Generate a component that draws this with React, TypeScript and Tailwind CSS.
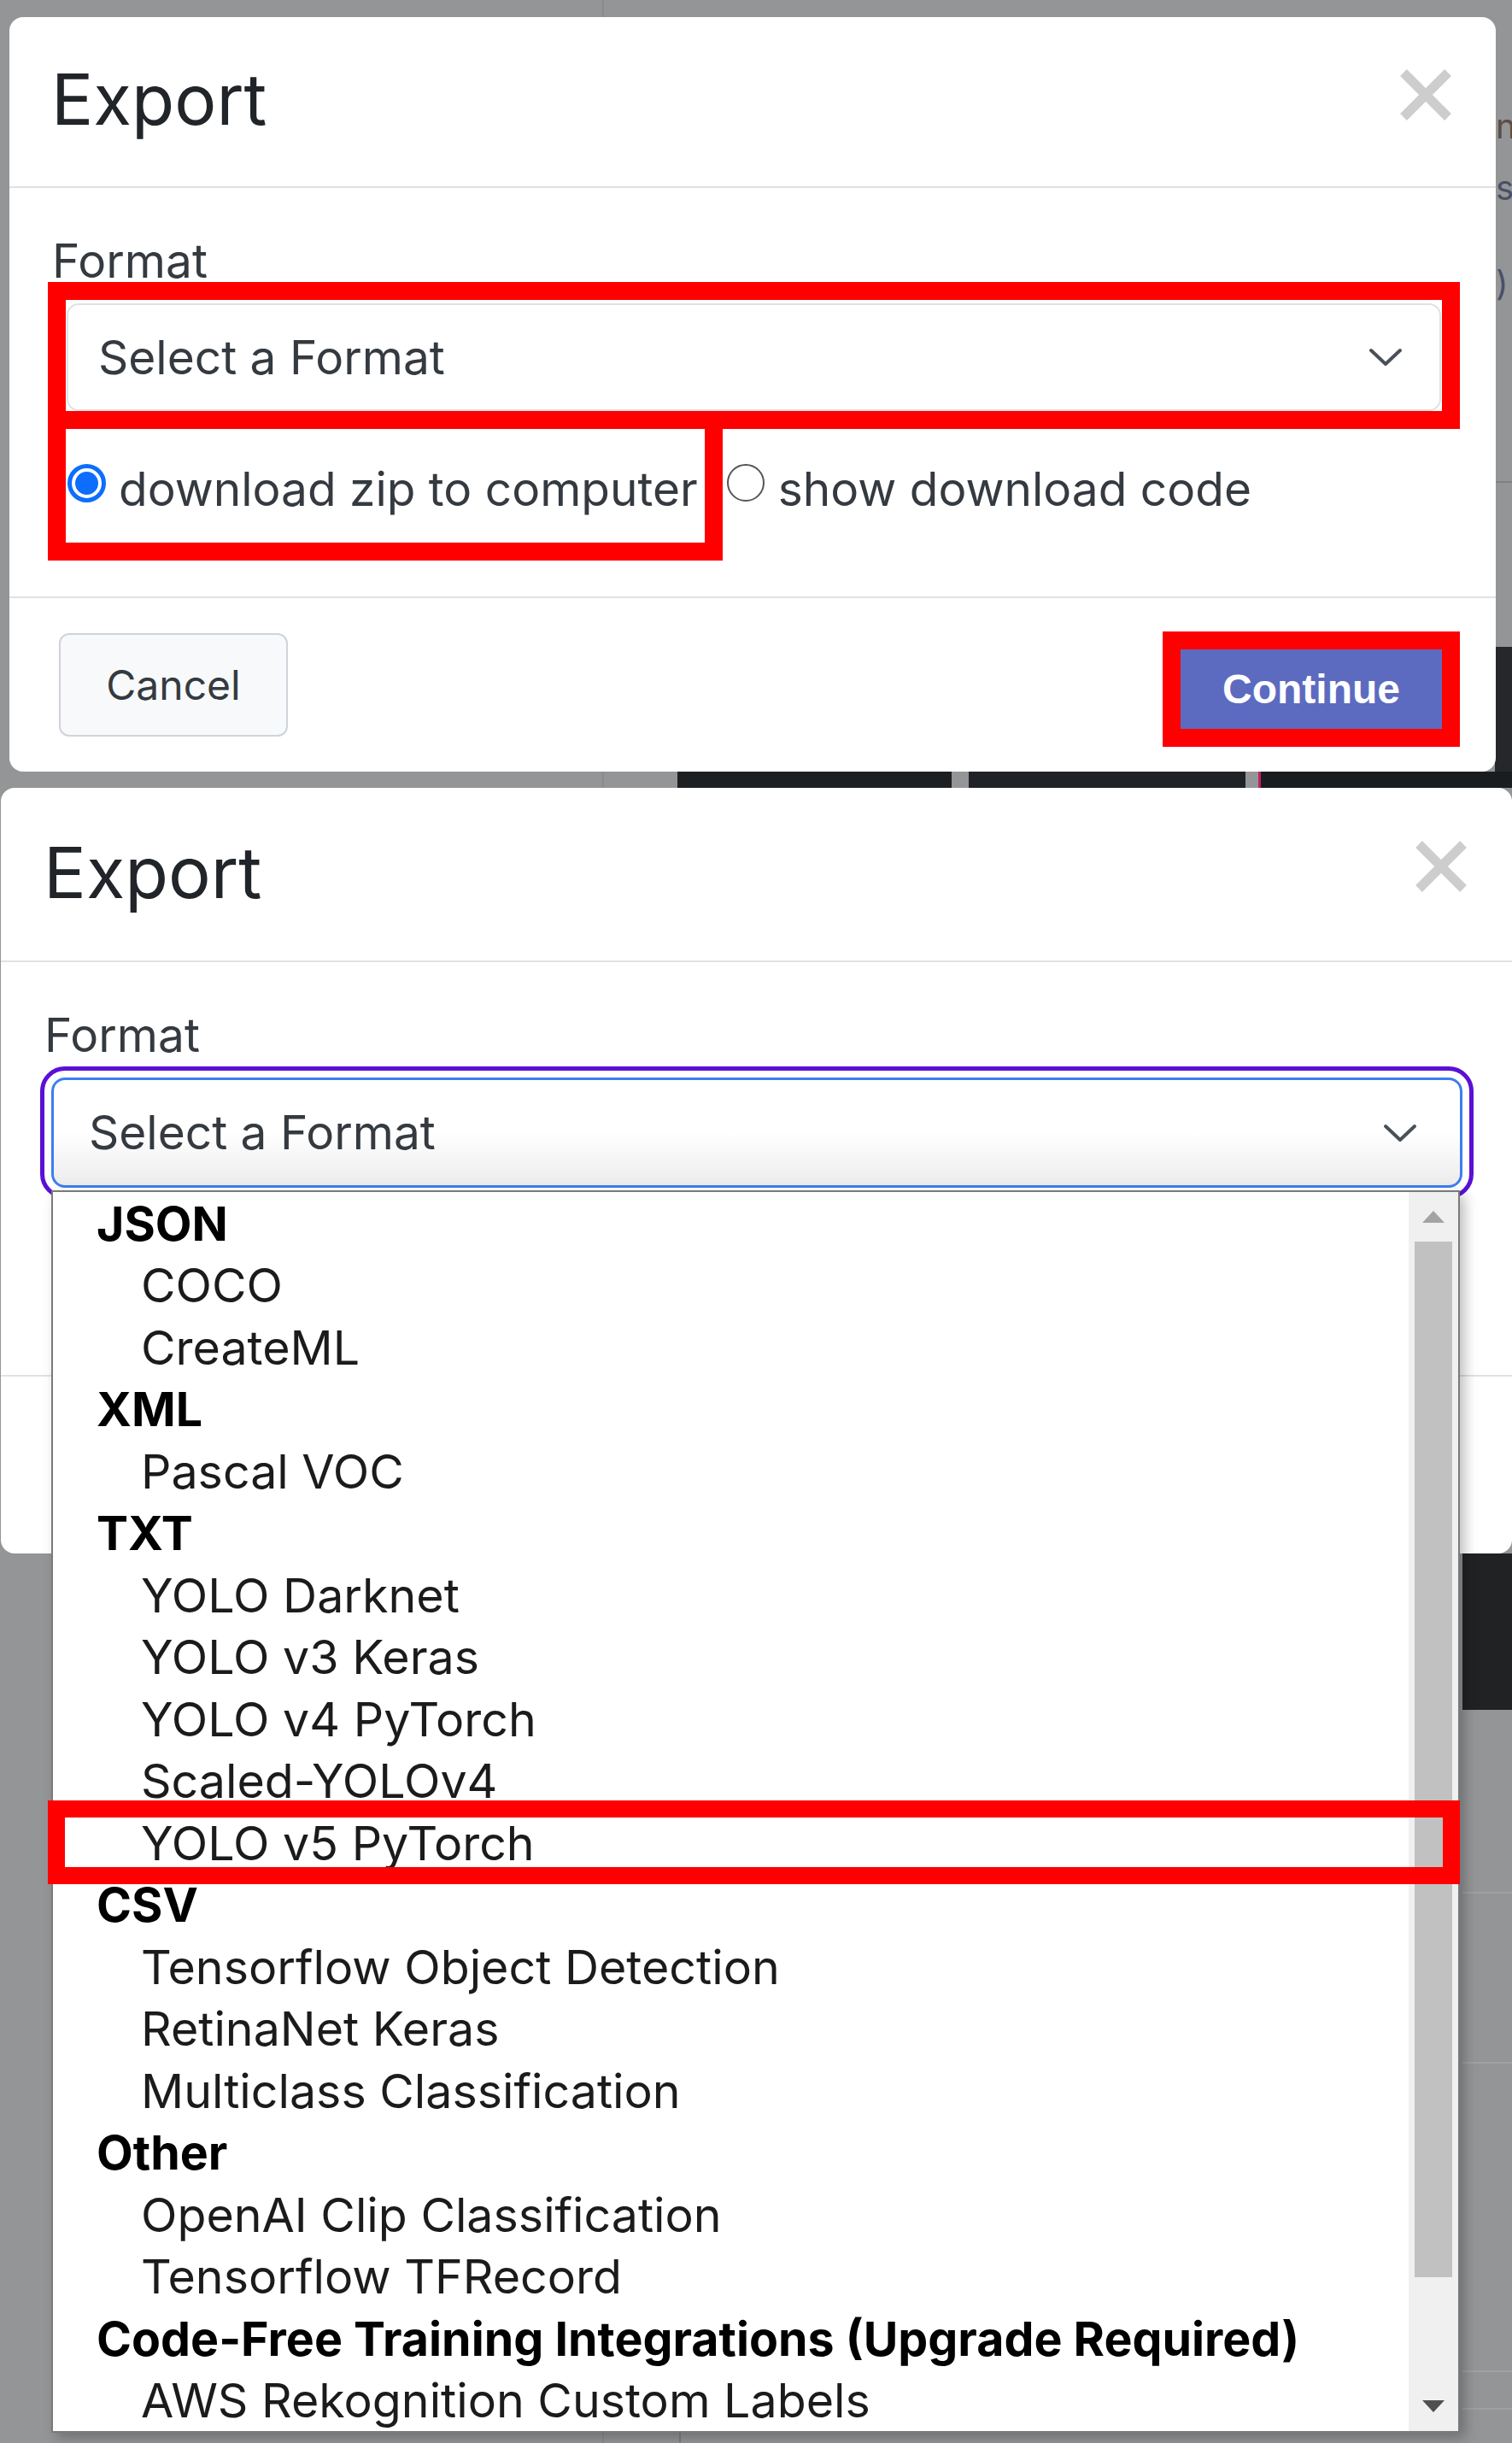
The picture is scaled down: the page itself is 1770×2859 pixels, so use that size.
import React from 'react';

const groups: { label: string; items: string[] }[] = [
  { label: 'JSON', items: ['COCO', 'CreateML'] },
  { label: 'XML', items: ['Pascal VOC'] },
  { label: 'TXT', items: ['YOLO Darknet', 'YOLO v3 Keras', 'YOLO v4 PyTorch', 'Scaled-YOLOv4', 'YOLO v5 PyTorch'] },
  { label: 'CSV', items: ['Tensorflow Object Detection', 'RetinaNet Keras', 'Multiclass Classification'] },
  { label: 'Other', items: ['OpenAI Clip Classification', 'Tensorflow TFRecord'] },
  { label: 'Code-Free Training Integrations (Upgrade Required)', items: ['AWS Rekognition Custom Labels'] },
];

const CloseIcon = () => (
  <svg width="64" height="62" viewBox="0 0 64 62" className="shrink-0">
    <path d="M6 5 L58 57 M58 5 L6 57" stroke="#cdcdcd" strokeWidth="11" fill="none" />
  </svg>
);

const Chevron = () => (
  <svg width="40" height="24" viewBox="0 0 40 24" className="shrink-0">
    <polyline points="3,4 20,20 37,4" fill="none" stroke="#495057" strokeWidth="4" strokeLinecap="round" strokeLinejoin="round" />
  </svg>
);

const Radios = () => (
  <div className="ml-[18px] mt-[52px] flex h-[64px] items-center text-[55px] leading-none text-[#343a40]">
    <span className="flex h-[45px] w-[45px] shrink-0 items-center justify-center rounded-full border-[5px] border-[#0d6efd]">
      <span className="h-[27px] w-[27px] rounded-full bg-[#0d6efd]" />
    </span>
    <span className="ml-[15px] pt-[14px]">download zip to computer</span>
    <span className="ml-[34px] h-[44px] w-[44px] shrink-0 rounded-full border-2 border-[#555]" />
    <span className="ml-[16px] pt-[14px]">show download code</span>
  </div>
);

const Footer = () => (
  <div className="flex flex-1 items-center justify-between pl-[58px] pr-[63px]">
    <button className="flex h-[121px] w-[268px] items-center justify-center rounded-[12px] border-2 border-[#ced4da] bg-[#f8f9fa] text-[48px] leading-none text-[#343a40]">
      Cancel
    </button>
    <button className="mt-[10px] flex h-[93px] w-[306px] items-center justify-center bg-[#5c6bc0] font-[family-name:'Liberation_Sans',Arial,sans-serif] text-[48px] font-bold leading-none text-white">
      Continue
    </button>
  </div>
);

const Dropdown = () => (
  <div className="absolute left-0 top-[132px] z-20 flex h-[1454px] w-[1649px] border-2 border-[#7a7a7a] bg-white shadow-[6px_6px_14px_rgba(0,0,0,0.25)]">
    <div className="flex-1">
      {groups.map((g) => (
        <React.Fragment key={g.label}>
          <div className="flex h-[72.5px] items-center pl-[51px] text-[55.5px] font-bold leading-none text-black">{g.label}</div>
          {g.items.map((it) => (
            <div key={it} className="flex h-[72.5px] items-center pl-[103px] text-[55.5px] leading-none text-[#1b1b1b]">
              {it}
            </div>
          ))}
        </React.Fragment>
      ))}
    </div>
    <div className="flex w-[58px] flex-col bg-[#f0f0f0]">
      <div className="flex h-[58px] items-center justify-center">
        <svg width="26" height="14" viewBox="0 0 26 14"><polygon points="13,0 26,14 0,14" fill="#a3a3a3" /></svg>
      </div>
      <div className="flex-1 px-[7px]">
        <div className="h-[1212px] bg-[#c1c1c1]" />
      </div>
      <div className="flex h-[58px] items-center justify-center">
        <svg width="26" height="14" viewBox="0 0 26 14"><polygon points="0,0 26,0 13,14" fill="#505050" /></svg>
      </div>
    </div>
  </div>
);

export default function App() {
  return (
    <div className="relative h-[2859px] w-[1770px] overflow-hidden bg-[#949597] font-[family-name:Inter,'Noto_Sans',sans-serif]">
      {/* page behind the modal backdrop */}
      <div className="absolute inset-0">
        <div className="absolute left-[705px] top-0 h-full w-[2px] bg-[#8a8b8c]" />
        <div className="absolute left-[795px] top-[2847px] h-[12px] w-[2px] bg-[#7d7e7f]" />
        <div className="absolute left-[793px] top-[903px] h-[19px] w-[321px] bg-[#1d2023]" />
        <div className="absolute left-[1134px] top-[903px] h-[19px] w-[324px] bg-[#1f2226]" />
        <div className="absolute left-[1473px] top-[903px] h-[19px] w-[297px] bg-[#1a1d20]" />
        <div className="absolute left-[1473px] top-[903px] h-[19px] w-[3px] bg-[#c0206a]" />
        <div className="absolute left-[1750px] top-[757px] h-[146px] w-[20px] bg-[#25272a]" />
        <div className="absolute left-[1750px] top-[563px] h-[2px] w-[20px] bg-[#7f8081]" />
        <div className="absolute left-[1751px] top-[128px] text-[40px] leading-none text-[#5b4d44]">ni</div>
        <div className="absolute left-[1751px] top-[200px] text-[40px] leading-none text-[#4a4f66]">s.</div>
        <div className="absolute left-[1751px] top-[312px] text-[40px] leading-none text-[#4a4f66]">)</div>
        <div className="absolute left-[1712px] top-[1818px] h-[183px] w-[58px] bg-[#202224]" />
        <div className="absolute left-[1712px] top-[2214px] h-[2px] w-[58px] bg-[#a0a1a2]" />
        <div className="absolute left-[1712px] top-[2413px] h-[2px] w-[58px] bg-[#a0a1a2]" />
        <div className="absolute left-[1712px] top-[2774px] h-[2px] w-[58px] bg-[#a0a1a2]" />
        <div className="absolute left-[1712px] top-[2818px] h-[2px] w-[58px] bg-[#a0a1a2]" />
      </div>

      <div className="relative flex flex-col">
        {/* first capture: dialog closed */}
        <div className="ml-[11px] mt-[20px] flex h-[883px] w-[1740px] flex-col rounded-[16px] bg-white">
          <div className="flex h-[198px] items-start justify-between pl-[49px] pr-[50px] pt-[56px]">
            <h1 className="text-[82px] leading-none text-[#212529]">Export</h1>
            <div className="mt-[4px]">
              <CloseIcon />
            </div>
          </div>
          <div className="h-[2px] bg-[#dee2e6]" />
          <div className="h-[478px] pl-[50px] pr-[64px] pt-[58px]">
            <div className="text-[55px] leading-none text-[#343a40]">Format</div>
            <div className="ml-[17px] mt-[22px] flex h-[126px] items-center justify-between rounded-[14px] border-2 border-[#dee2e6] pl-[35px] pr-[43px]">
              <span className="text-[55px] leading-none text-[#343a40]">Select a Format</span>
              <Chevron />
            </div>
            <Radios />
          </div>
          <div className="h-[2px] bg-[#dee2e6]" />
          <Footer />
        </div>

        {/* second capture: select open, list covers the rest of the body */}
        <div className="ml-[1px] mt-[19px] flex h-[896px] w-[1769px] flex-col rounded-[16px] bg-white">
          <div className="flex h-[202px] items-start justify-between pl-[50px] pr-[51px] pt-[58px]">
            <h1 className="text-[83px] leading-none text-[#212529]">Export</h1>
            <div className="mt-[3px]">
              <CloseIcon />
            </div>
          </div>
          <div className="h-[2px] bg-[#dee2e6]" />
          <div className="h-[483px] pl-[51px] pr-[58px] pt-[58px]">
            <div className="text-[55px] leading-none text-[#343a40]">Format</div>
            <div className="relative ml-[8px] mt-[22px]">
              <div className="flex h-[129px] items-center justify-between rounded-[16px] border-[3px] border-[#3d7ef0] bg-gradient-to-b from-white via-white to-[#ececec] pl-[41px] pr-[50px] outline-[5px] outline-offset-[8px] outline-[#5a10d6] outline-solid">
                <span className="text-[55px] leading-none text-[#343a40]">Select a Format</span>
                <Chevron />
              </div>
              <Dropdown />
            </div>
          </div>
          <div className="h-[2px] bg-[#dee2e6]" />
          <div className="flex-1" />
        </div>
      </div>

      {/* red annotation boxes */}
      <div className="pointer-events-none absolute left-[56px] top-[330px] z-50 h-[172px] w-[1653px] border-[21px] border-[#ff0000]" />
      <div className="pointer-events-none absolute left-[56px] top-[481px] z-50 h-[175px] w-[790px] border-[21px] border-[#ff0000]" />
      <div className="pointer-events-none absolute left-[1361px] top-[739px] z-50 h-[135px] w-[348px] border-[21px] border-[#ff0000]" />
      <div className="pointer-events-none absolute left-[56px] top-[2107px] z-50 h-[98px] w-[1653px] border-[20px] border-[#ff0000]" />
    </div>
  );
}
